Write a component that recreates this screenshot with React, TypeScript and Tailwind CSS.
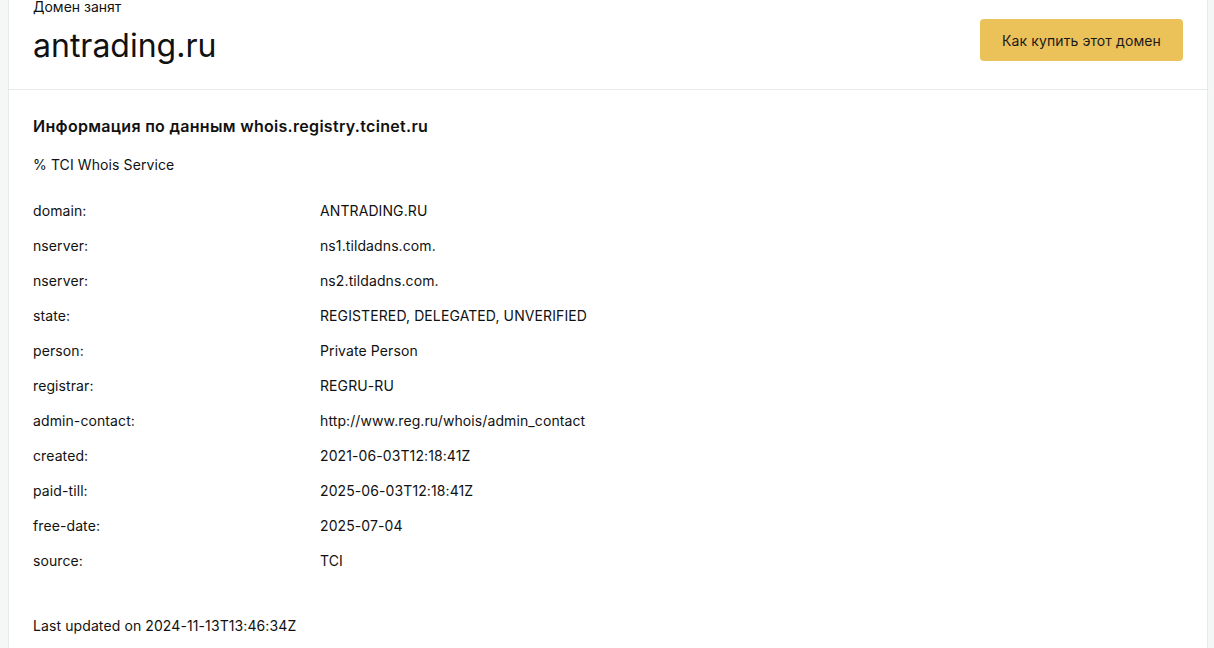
const whois = [
  { key: "domain:", value: "ANTRADING.RU" },
  { key: "nserver:", value: "ns1.tildadns.com." },
  { key: "nserver:", value: "ns2.tildadns.com." },
  { key: "state:", value: "REGISTERED, DELEGATED, UNVERIFIED" },
  { key: "person:", value: "Private Person" },
  { key: "registrar:", value: "REGRU-RU" },
  { key: "admin-contact:", value: "http://www.reg.ru/whois/admin_contact" },
  { key: "created:", value: "2021-06-03T12:18:41Z" },
  { key: "paid-till:", value: "2025-06-03T12:18:41Z" },
  { key: "free-date:", value: "2025-07-04" },
  { key: "source:", value: "TCI" },
];

export default function App() {
  return (
    <div className="min-h-screen bg-[#f5f7f7] px-2 text-[#111] font-['Inter','Noto_Sans',sans-serif]">
      <div className="w-[1200px] bg-white border-x border-[#e6eaeb] min-h-[648px]">
        {/* header */}
        <div className="flex items-start justify-between px-6 border-b border-[#e6eaeb] h-[90px]">
          <div>
            <div className="text-[14px] leading-4 -mt-px">Домен занят</div>
            <h1 className="text-[32px] leading-10 mt-[11px] font-normal">antrading.ru</h1>
          </div>
          <button className="mt-[19px] h-[42px] w-[203px] rounded bg-[#ebc15a] text-[14px] tracking-[0.1px] text-[#1a1a1a]">
            Как купить этот домен
          </button>
        </div>

        {/* whois */}
        <div className="px-6 pt-6 text-[14px] tracking-[0.1px]">
          <h2 className="text-[16px] leading-6 font-semibold tracking-[0.3px]">Информация по данным whois.registry.tcinet.ru</h2>
          <p className="mt-[17px] leading-5">% TCI Whois Service</p>
          <div className="mt-[18px]">
            {whois.map((row, i) => (
              <div key={i} className="flex items-center h-[35px]">
                <div className="w-[287px]">{row.key}</div>
                <div>{row.value}</div>
              </div>
            ))}
          </div>
          <p className="mt-[38px] leading-5">Last updated on 2024-11-13T13:46:34Z</p>
        </div>
      </div>
    </div>
  );
}
